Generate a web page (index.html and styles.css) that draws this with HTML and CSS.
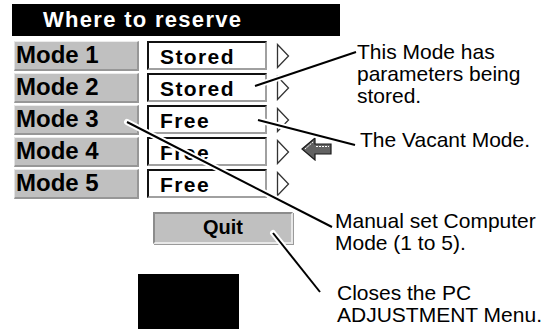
FILE: index.html
```html
<!DOCTYPE html>
<html lang="en">
<head>
    <meta charset="UTF-8">
    <title>Where to reserve</title>
    <link rel="stylesheet" href="styles.css">
</head>
<body>
<div class="page">
    <div class="menu">
        <div class="menu-title">Where to reserve</div>
        <div class="row first">
            <div class="mode">Mode 1</div>
            <div class="value">Stored</div>
            <svg class="tri" width="14" height="26" viewBox="0 0 14 26"><path d="M1.5 1.5 L12.5 13 L1.5 24.5 Z" fill="#fff" stroke="#333" stroke-width="1.3"/></svg>
        </div>
        <div class="row">
            <div class="mode">Mode 2</div>
            <div class="value">Stored</div>
            <svg class="tri" width="14" height="26" viewBox="0 0 14 26"><path d="M1.5 1.5 L12.5 13 L1.5 24.5 Z" fill="#fff" stroke="#333" stroke-width="1.3"/></svg>
        </div>
        <div class="row">
            <div class="mode">Mode 3</div>
            <div class="value">Free</div>
            <svg class="tri" width="14" height="26" viewBox="0 0 14 26"><path d="M1.5 1.5 L12.5 13 L1.5 24.5 Z" fill="#fff" stroke="#333" stroke-width="1.3"/></svg>
        </div>
        <div class="row">
            <div class="mode">Mode 4</div>
            <div class="value">Free</div>
            <svg class="tri" width="14" height="26" viewBox="0 0 14 26"><path d="M1.5 1.5 L12.5 13 L1.5 24.5 Z" fill="#fff" stroke="#333" stroke-width="1.3"/></svg>
            <svg class="pointer" width="31" height="24" viewBox="0 0 31 24">
                <path d="M1 12 L14 1 L14 7 L30 7 L30 17 L14 17 L14 23 Z" fill="#626262" stroke="#1a1a1a" stroke-width="1.2"/>
                <path d="M15 9.5 L28 9.5" stroke="#fff" stroke-width="1" stroke-dasharray="2 1"/>
                <path d="M4 12 L12 5" stroke="#fff" stroke-width="1" stroke-dasharray="2 1"/>
            </svg>
        </div>
        <div class="row">
            <div class="mode">Mode 5</div>
            <div class="value">Free</div>
            <svg class="tri" width="14" height="26" viewBox="0 0 14 26"><path d="M1.5 1.5 L12.5 13 L1.5 24.5 Z" fill="#fff" stroke="#333" stroke-width="1.3"/></svg>
        </div>
        <div class="quit">Quit</div>
        <div class="screen"></div>
    </div>
    <div class="notes">
        <p class="note n1">This Mode has<br>parameters being<br>stored.</p>
        <p class="note n2">The Vacant Mode.</p>
        <p class="note n3">Manual set Computer<br>Mode (1 to 5).</p>
        <p class="note n4">Closes the PC<br>ADJUSTMENT Menu.</p>
    </div>
</div>
<!-- leader lines sit over the menu -->
<svg class="leaders" width="559" height="329" viewBox="0 0 559 329">
    <g stroke="#fff" stroke-width="6" stroke-linecap="round">
        <path d="M255 86 L356 52"/>
        <path d="M258 120 L355 145"/>
        <path d="M127 122 L332 227"/>
        <path d="M273 233 L320 292"/>
    </g>
    <g stroke="#000" stroke-width="2">
        <path d="M255 86 L356 52"/>
        <path d="M258 120 L355 145"/>
        <path d="M127 122 L332 227"/>
        <path d="M273 233 L320 292"/>
    </g>
</svg>
</body>
</html>
```

FILE: styles.css
```css
*{margin:0;padding:0;box-sizing:border-box;}
html,body{overflow:hidden;}
body{background:#fff;font-family:"Liberation Sans",Arial,sans-serif;color:#000;width:559px;height:329px;}
.page{display:flex;}
.menu{flex:none;width:323px;margin-left:12px;padding-top:4px;}
.menu-title{width:328px;height:32px;background:#000;color:#fff;font-weight:bold;font-size:22px;letter-spacing:1.3px;line-height:32px;padding-left:31px;}
.row{display:flex;align-items:flex-start;height:30px;margin-top:2px;}
.row.first{margin-top:5px;}
.mode{width:125px;height:30px;margin-left:2px;background:#c0c0c0;border-top:1px solid #ececec;border-left:1px solid #e2e2e2;border-right:2px solid #979797;border-bottom:2px solid #979797;font-size:24px;font-weight:bold;line-height:26px;padding-left:1px;}
.value{width:120px;height:29px;margin-left:8px;background:#fff;border-top:2px solid #111;border-left:2px solid #111;border-right:2px solid #a0a0a0;border-bottom:2px solid #a0a0a0;font-size:21px;font-weight:bold;letter-spacing:1.4px;line-height:27px;padding-left:11px;}
.tri{margin-left:9px;margin-top:2px;}
.pointer{margin-left:11px;}
.quit{width:140px;height:32px;margin-top:13px;margin-left:141px;background:#c0c0c0;border-top:2px solid #8c8c8c;border-left:2px solid #8c8c8c;border-right:2px solid #e8e8e8;border-bottom:2px solid #e8e8e8;box-shadow:1px 1px 0 #9a9a9a;font-size:20px;font-weight:bold;text-align:center;line-height:27px;}
.screen{width:101px;height:60px;margin-top:30px;margin-left:126px;background:#000;}
.notes{flex:1;}
.note{font-size:21px;line-height:22px;}
.n1{margin-top:41px;padding-left:22px;}
.n2{margin-top:22px;padding-left:25px;}
.n3{margin-top:59px;}
.n4{margin-top:28px;padding-left:2px;}
.leaders{position:absolute;left:0;top:0;pointer-events:none;}
```
